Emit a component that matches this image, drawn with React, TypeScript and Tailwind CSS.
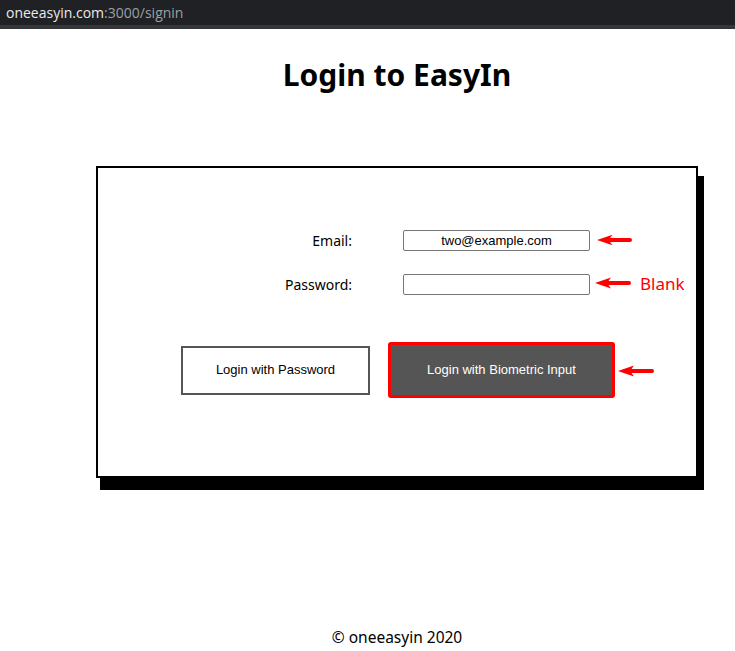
import React from "react";

function Arrow({ className }: { className: string }) {
  return (
    <svg className={className} viewBox="0 0 36 12" fill="#ff0000">
      <path d="M0 6 L16 0.5 L13.5 4 L34 4 Q36 4 36 6 Q36 8 34 8 L13.5 8 L16 11.5 Z" />
    </svg>
  );
}

export default function App() {
  return (
    <div className="w-full min-h-[651px] bg-white relative overflow-hidden font-['Noto_Sans',sans-serif] text-black">
      <div className="h-[25px] bg-[#202124] px-[6px] flex items-center text-[14px] leading-none font-['Open_Sans',sans-serif]">
        <span className="text-[#e8eaed]">oneeasyin.com</span>
        <span className="text-[#9aa0a6]">:3000/signin</span>
      </div>
      <div className="h-[4px] bg-[#35363a]" />

      <div className="pl-[59px] flex flex-col items-center">
        <h1 className="mt-[26px] text-[30px] font-bold leading-[40px]">Login to EasyIn</h1>

        <div className="mt-[71px] w-[602px] h-[312px] shrink-0 border-2 border-black bg-white shadow-[5px_11px_0_1px_#000]">
          <div className="pt-[62px] grid grid-cols-[254px_187px] gap-x-[51px] gap-y-[23px]">
            <label className="flex items-center justify-end text-[14px]">Email:</label>
            <input
              readOnly
              value="two@example.com"
              className="h-[21px] border border-[#767676] rounded-[2px] text-center text-[13px] font-['Liberation_Sans',sans-serif] outline-none"
            />
            <label className="flex items-center justify-end text-[14px]">Password:</label>
            <input
              readOnly
              type="password"
              value=""
              className="h-[21px] border border-[#767676] rounded-[2px] text-center text-[13px] font-['Liberation_Sans',sans-serif] outline-none"
            />
          </div>
          <div className="mt-[47px] ml-[83px] flex items-center gap-[18px] font-['Liberation_Sans',sans-serif] text-[13px]">
            <button className="w-[189px] h-[49px] border-2 border-[#555555] bg-white text-black">
              Login with Password
            </button>
            <button className="w-[227px] h-[56px] border-[3px] border-[#ff0000] rounded-[3px] bg-[#555555] text-white">
              Login with Biometric Input
            </button>
          </div>
        </div>

        <footer className="mt-[147px] text-[15.5px] leading-[24px]">© oneeasyin 2020</footer>
      </div>

      <Arrow className="absolute left-[597px] top-[234px] w-[35px] h-[12px]" />
      <Arrow className="absolute left-[595px] top-[277px] w-[36px] h-[12px]" />
      <span className="absolute left-[640px] top-[272px] text-[17px] leading-[24px] text-[#ff0000]">Blank</span>
      <Arrow className="absolute left-[617px] top-[365px] w-[38px] h-[12px]" />
    </div>
  );
}
